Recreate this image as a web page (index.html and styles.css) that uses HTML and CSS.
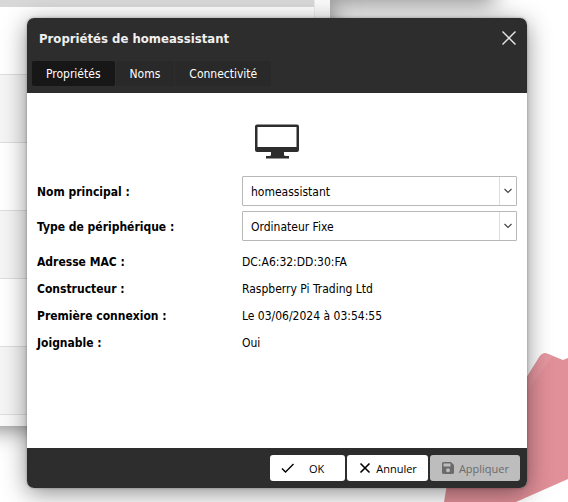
FILE: index.html
```html
<!DOCTYPE html>
<html lang="fr">
<head>
    <meta charset="UTF-8">
    <meta name="viewport" content="width=device-width, initial-scale=1.0">
    <title>Propriétés de homeassistant</title>
    <link rel="stylesheet" href="styles.css">
</head>
<body>
    <div class="desktop">
        <svg class="wallpaper" viewBox="0 0 148 172" aria-hidden="true">
            <path d="M24 172 L28 148 L100 58 L120 26 Q123 22 128 24 L143 30 L148 28 V149 L96 172 Z" fill="#e18f98"/>
            <path d="M100 58 L120 26 Q123 22 128 24 L133 26 L106 62 Z" fill="#e4969f"/>
        </svg>
        <div class="window window-right"></div>
        <div class="window window-list">
            <div class="list-rows">
                <div class="list-header"></div>
                <div class="list-row"></div>
                <div class="list-row alt"></div>
                <div class="list-row"></div>
                <div class="list-row alt"></div>
                <div class="list-row"></div>
                <div class="list-row alt"></div>
            </div>
        </div>

        <form class="dialog" role="dialog" aria-labelledby="dialogTitle">
            <header class="dialog-header">
                <div class="title-bar">
                    <h1 id="dialogTitle">Propriétés de homeassistant</h1>
                    <button type="button" class="close" aria-label="Fermer">
                        <svg viewBox="0 0 16 16" width="16" height="16"><path d="M1.5 1.5 L14.5 14.5 M14.5 1.5 L1.5 14.5" fill="none" stroke="currentColor" stroke-width="1.4"/></svg>
                    </button>
                </div>
                <nav class="tabs">
                    <button type="button" class="tab active">Propriétés</button>
                    <button type="button" class="tab">Noms</button>
                    <button type="button" class="tab">Connectivité</button>
                </nav>
            </header>

            <div class="dialog-body">
                <svg class="device-icon" viewBox="0 0 46 36" width="46" height="36" aria-hidden="true">
                    <path fill="#2d2d2d" fill-rule="evenodd" d="M3 0.5 H43 Q45 0.5 45 2.5 V26 Q45 28 43 28 H30 V31 Q30 32 32 32 H35 V34.5 H12 V32 H15 Q17 32 17 31 V28 H3 Q1 28 1 26 V2.5 Q1 0.5 3 0.5 Z M3.5 3 V23 H42.5 V3 Z"/>
                </svg>
                <div class="field">
                    <label for="mainName">Nom principal :</label>
                    <div class="combo">
                        <select id="mainName">
                            <option>homeassistant</option>
                        </select>
                        <span class="trigger"><svg viewBox="0 0 10 6" width="10" height="6"><path d="M1.5 1 L5 4.5 L8.5 1" fill="none" stroke="#444" stroke-width="1.2"/></svg></span>
                    </div>
                </div>
                <div class="field">
                    <label for="deviceType">Type de périphérique :</label>
                    <div class="combo">
                        <select id="deviceType">
                            <option>Ordinateur Fixe</option>
                        </select>
                        <span class="trigger"><svg viewBox="0 0 10 6" width="10" height="6"><path d="M1.5 1 L5 4.5 L8.5 1" fill="none" stroke="#444" stroke-width="1.2"/></svg></span>
                    </div>
                </div>
                <dl class="details">
                    <dt>Adresse MAC :</dt>
                    <dd>DC:A6:32:DD:30:FA</dd>
                    <dt>Constructeur :</dt>
                    <dd>Raspberry Pi Trading Ltd</dd>
                    <dt>Première connexion :</dt>
                    <dd>Le 03/06/2024 à 03:54:55</dd>
                    <dt>Joignable :</dt>
                    <dd>Oui</dd>
                </dl>
            </div>

            <footer class="dialog-footer">
                <button type="submit" class="btn">
                    <svg viewBox="0 0 14 14" width="14" height="14"><path d="M1 7.5 L4.5 11 L12.5 3" fill="none" stroke="currentColor" stroke-width="1.4"/></svg>
                    <span>OK</span>
                </button>
                <button type="button" class="btn">
                    <svg viewBox="0 0 14 14" width="14" height="14"><path d="M2.5 2.5 L11.5 11.5 M11.5 2.5 L2.5 11.5" fill="none" stroke="currentColor" stroke-width="1.6"/></svg>
                    <span>Annuler</span>
                </button>
                <button type="button" class="btn" disabled>
                    <svg viewBox="0 0 14 14" width="14" height="14"><path fill="currentColor" fill-rule="evenodd" d="M2.5 1 H10 L13 4 V11.5 Q13 13 11.5 13 H2.5 Q1 13 1 11.5 V2.5 Q1 1 2.5 1 Z M2.5 2.5 V5.5 H9.5 V2.5 Z M7 7.3 A2 2 0 1 0 7 11.3 A2 2 0 1 0 7 7.3 Z"/></svg>
                    <span>Appliquer</span>
                </button>
            </footer>
        </form>
    </div>
</body>
</html>
```

FILE: styles.css
```css
* {
    box-sizing: border-box;
}
body {
    margin: 0;
    font-family: Tahoma, "DejaVu Sans Condensed", "Noto Sans", sans-serif;
    font-size: 12px;
    color: #000;
}
button, select {
    font: inherit;
}
.desktop {
    position: relative;
    display: flex;
    min-height: 100vh;
    padding: 18px 41px 14px 27px;
    overflow: hidden;
    background-color: #fff;
}
.wallpaper {
    position: absolute;
    right: 0;
    bottom: 0;
    width: 148px;
}

/* Windows behind the dialog */
.window {
    position: absolute;
    background-color: #fafafa;
    box-shadow: 0 3px 22px rgba(0, 0, 0, 0.5);
}
.window-right {
    top: -20px;
    left: 300px;
    width: 194px;
    height: 20px;
}
.window-list {
    top: 0;
    left: -20px;
    width: 350px;
    height: 426px;
    padding: 0 15px 0 20px;
}
.list-rows {
    border-right: 1px solid #ececec;
}
.list-header {
    height: 7px;
    background-color: #d8d8d8;
}
.list-row {
    height: 68px;
    background-color: #fff;
    border-bottom: 1px solid #dedede;
}
.list-row.alt {
    background-color: #f5f5f5;
}

/* Dialog */
.dialog {
    position: relative;
    flex: 1;
    display: flex;
    flex-direction: column;
    border-radius: 7px;
    background-color: #fff;
    box-shadow: 0 5px 24px rgba(0, 0, 0, 0.45), 0 0 3px rgba(0, 0, 0, 0.3);
}
.dialog-header {
    height: 75px;
    background-color: #2d2d2d;
    border-radius: 7px 7px 0 0;
}
.title-bar {
    display: flex;
    align-items: center;
    justify-content: space-between;
    height: 40px;
    padding: 0 8px 0 12px;
}
.title-bar h1 {
    margin: 0;
    font-size: 13px;
    color: #f0f0f0;
}
.close {
    display: flex;
    padding: 2px;
    border: none;
    background: none;
    color: #e8e8e8;
    cursor: pointer;
}
.tabs {
    display: flex;
    gap: 1px;
    padding: 3px 5px;
}
.tab {
    height: 25px;
    padding: 0 14px;
    border: none;
    border-radius: 2px;
    background-color: #292929;
    color: #fff;
    cursor: pointer;
}
.tab.active {
    background-color: #171717;
}
.dialog-body {
    flex: 1;
    display: flex;
    flex-direction: column;
    padding: 31px 10px;
}
.device-icon {
    align-self: center;
    margin-bottom: 16px;
}
.field {
    display: grid;
    grid-template-columns: 205px 1fr;
    align-items: center;
    margin-bottom: 5px;
}
.field label, .details dt {
    font-weight: bold;
}
.field label {
    padding-top: 2px;
}
.combo {
    position: relative;
}
.combo select {
    display: block;
    width: 100%;
    height: 30px;
    padding: 2px 24px 0 8px;
    border: 1px solid #b8b8b8;
    border-radius: 1px;
    background-color: #fff;
    color: #000;
    appearance: none;
}
.trigger {
    position: absolute;
    top: 1px;
    right: 1px;
    bottom: 1px;
    display: flex;
    align-items: center;
    justify-content: center;
    width: 17px;
    border-left: 1px solid #ddd;
    pointer-events: none;
}
.details {
    display: grid;
    grid-template-columns: 205px 1fr;
    margin: 3px 0 0;
    line-height: 27px;
}
.details dd {
    margin: 0;
}
.dialog-footer {
    display: flex;
    justify-content: flex-end;
    gap: 2px;
    height: 40px;
    padding: 7px;
    background-color: #2d2d2d;
    border-radius: 0 0 7px 7px;
}
.btn {
    display: flex;
    align-items: center;
    gap: 4px;
    min-width: 75px;
    padding: 0 11px;
    border: none;
    border-radius: 3px;
    background-color: #fff;
    color: #000;
    font-family: "Open Sans", sans-serif;
    font-size: 11px;
    cursor: pointer;
}
.btn span {
    flex: 1;
    text-align: center;
}
.btn:disabled {
    background-color: #bdbdbd;
    color: #6b6b6b;
    cursor: default;
}
```
